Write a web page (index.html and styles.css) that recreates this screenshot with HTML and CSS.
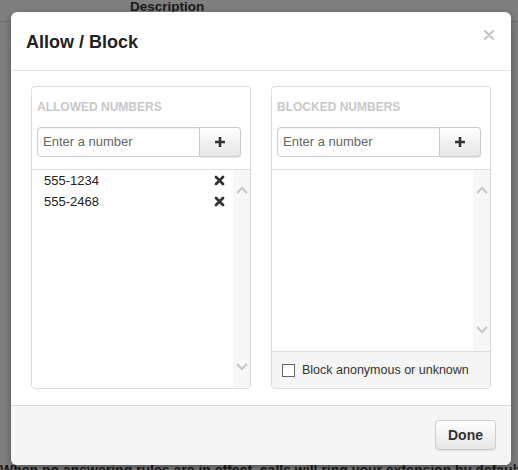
FILE: index.html
```html
<!DOCTYPE html>
<html>
<head>
<meta charset="utf-8">
<link rel="stylesheet" href="styles.css">
</head>
<body>
<div class="page">
  <div class="page-head"><span class="col-title">Description</span></div>
  <div class="page-foot">When no answering rules are in effect, calls will ring your extension by default</div>
</div>

<div class="modal">
  <div class="modal-header">
    <h1 class="modal-title">Allow / Block</h1>
    <svg class="close" width="10" height="10" viewBox="0 0 10 10"><path d="M1 1L9 9M9 1L1 9" stroke="#c4c4c4" stroke-width="2" stroke-linecap="round"/></svg>
  </div>
  <div class="modal-body">
    <div class="panel">
      <div class="panel-head">
        <div class="label">ALLOWED NUMBERS</div>
        <div class="input-group">
          <div class="input">Enter a number</div>
          <div class="add-btn"><svg width="12" height="12" viewBox="0 0 12 12"><path d="M6 1V11M1 6H11" stroke="#333" stroke-width="2.6"/></svg></div>
        </div>
      </div>
      <div class="list">
        <div class="items">
          <div class="item"><span>555-1234</span><svg class="rm" width="11" height="11" viewBox="0 0 11 11"><path d="M2 2L9 9M9 2L2 9" stroke="#333" stroke-width="2.8" stroke-linecap="round"/></svg></div>
          <div class="item"><span>555-2468</span><svg class="rm" width="11" height="11" viewBox="0 0 11 11"><path d="M2 2L9 9M9 2L2 9" stroke="#333" stroke-width="2.8" stroke-linecap="round"/></svg></div>
        </div>
        <div class="scroll">
          <svg width="12" height="8" viewBox="0 0 12 8"><path d="M1 7L6 2L11 7" fill="none" stroke="#c8c8c8" stroke-width="2.2"/></svg>
          <svg width="12" height="8" viewBox="0 0 12 8"><path d="M1 1L6 6L11 1" fill="none" stroke="#c8c8c8" stroke-width="2.2"/></svg>
        </div>
      </div>
    </div>
    <div class="panel">
      <div class="panel-head">
        <div class="label">BLOCKED NUMBERS</div>
        <div class="input-group">
          <div class="input">Enter a number</div>
          <div class="add-btn"><svg width="12" height="12" viewBox="0 0 12 12"><path d="M6 1V11M1 6H11" stroke="#333" stroke-width="2.6"/></svg></div>
        </div>
      </div>
      <div class="list">
        <div class="items"></div>
        <div class="scroll">
          <svg width="12" height="8" viewBox="0 0 12 8"><path d="M1 7L6 2L11 7" fill="none" stroke="#c8c8c8" stroke-width="2.2"/></svg>
          <svg width="12" height="8" viewBox="0 0 12 8"><path d="M1 1L6 6L11 1" fill="none" stroke="#c8c8c8" stroke-width="2.2"/></svg>
        </div>
      </div>
      <div class="panel-foot">
        <span class="checkbox"></span>
        <span class="cb-label">Block anonymous or unknown</span>
      </div>
    </div>
  </div>
  <div class="modal-footer">
    <div class="done">Done</div>
  </div>
</div>
</body>
</html>
```

FILE: styles.css
```css
* { box-sizing: border-box; }
html, body { margin: 0; padding: 0; }
body {
  width: 518px;
  height: 470px;
  overflow: hidden;
  background: #7f7f7f;
  font-family: "Liberation Sans", Arial, sans-serif;
  color: #333;
  position: relative;
}
.page {
  height: 470px;
  display: flex;
  flex-direction: column;
  justify-content: space-between;
  overflow: hidden;
}
.page-head {
  height: 22px;
  border-bottom: 1px solid #6e6e6e;
  padding-left: 130px;
}
.col-title {
  display: block;
  font-size: 13.5px;
  font-weight: bold;
  color: #1a1a1a;
  line-height: 14px;
  margin-top: 0;
}
.page-foot {
  font-size: 14px;
  font-weight: bold;
  color: #1a1a1a;
  white-space: nowrap;
  overflow: hidden;
  line-height: 16px;
  margin-bottom: -8px;
}

.modal {
  position: absolute;
  left: 11px;
  top: 12px;
  width: 500px;
  height: 453px;
  background: #fff;
  border-radius: 6px;
  box-shadow: 0 3px 9px rgba(0,0,0,0.35);
  display: flex;
  flex-direction: column;
  overflow: hidden;
}
.modal-header {
  height: 59px;
  border-bottom: 1px solid #e5e5e5;
  display: flex;
  align-items: center;
  justify-content: space-between;
  padding: 0 17px 0 15px;
}
.modal-title {
  margin: 0;
  font-size: 18px;
  font-weight: bold;
  color: #222;
  position: relative;
  top: 1px;
}
.close { position: relative; top: -6px; }

.modal-body {
  height: 334px;
  padding: 15px 20px 16px 20px;
  display: flex;
  gap: 20px;
}
.panel {
  width: 220px;
  border: 1px solid #ddd;
  border-radius: 4px;
  display: flex;
  flex-direction: column;
  overflow: hidden;
}
.panel-head {
  padding: 12px 9px 12px 5px;
  border-bottom: 1px solid #ddd;
}
.label {
  font-size: 12px;
  font-weight: bold;
  line-height: 16px;
  color: #c8c8c8;
  margin-bottom: 12px;
}
.input-group { display: flex; height: 30px; }
.input {
  width: 163px;
  height: 30px;
  border: 1px solid #ccc;
  border-radius: 4px 0 0 4px;
  font-size: 13px;
  line-height: 28px;
  color: #666;
  padding-left: 5px;
  box-shadow: inset 0 1px 1px rgba(0,0,0,0.06);
}
.add-btn {
  flex: 1;
  border: 1px solid #ccc;
  border-left: none;
  border-radius: 0 4px 4px 0;
  background: linear-gradient(#fff, #e6e6e6);
  display: flex;
  align-items: center;
  justify-content: center;
  box-shadow: 0 1px 1px rgba(0,0,0,0.08);
}

.list { flex: 1; display: flex; }
.items { flex: 1; padding: 0 0 0 12px; }
.item {
  height: 21px;
  display: flex;
  align-items: center;
  justify-content: space-between;
  padding-right: 8px;
  font-size: 13px;
  color: #222;
}
.scroll {
  width: 17px;
  background: #f7f7f7;
  display: flex;
  flex-direction: column;
  justify-content: space-between;
  align-items: center;
  padding: 16px 0 17px 0;
}

.panel-foot {
  height: 37px;
  border-top: 1px solid #ddd;
  background: #f5f5f5;
  display: flex;
  align-items: center;
  padding-left: 10px;
}
.checkbox {
  width: 13px;
  height: 13px;
  border: 1px solid #666;
  background: #fff;
  margin-right: 7px;
}
.cb-label { font-size: 12.5px; color: #333; }

.modal-footer {
  flex: 1;
  border-top: 1px solid #ddd;
  background: #f5f5f5;
  display: flex;
  justify-content: flex-end;
  align-items: flex-start;
  padding: 14px 15px 0 0;
}
.done {
  width: 61px;
  height: 30px;
  border: 1px solid #ccc;
  border-radius: 4px;
  background: linear-gradient(#fff, #e6e6e6);
  font-size: 14px;
  font-weight: bold;
  color: #333;
  display: flex;
  align-items: center;
  justify-content: center;
  box-shadow: 0 1px 1px rgba(0,0,0,0.08);
}
```
